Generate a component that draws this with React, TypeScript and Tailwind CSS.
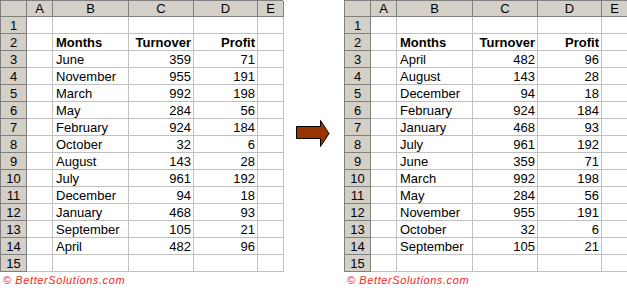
const before: [string, number, number][] = [
  ["June", 359, 71],
  ["November", 955, 191],
  ["March", 992, 198],
  ["May", 284, 56],
  ["February", 924, 184],
  ["October", 32, 6],
  ["August", 143, 28],
  ["July", 961, 192],
  ["December", 94, 18],
  ["January", 468, 93],
  ["September", 105, 21],
  ["April", 482, 96],
];

const after: [string, number, number][] = [
  ["April", 482, 96],
  ["August", 143, 28],
  ["December", 94, 18],
  ["February", 924, 184],
  ["January", 468, 93],
  ["July", 961, 192],
  ["June", 359, 71],
  ["March", 992, 198],
  ["May", 284, 56],
  ["November", 955, 191],
  ["October", 32, 6],
  ["September", 105, 21],
];

const cols = ["A", "B", "C", "D", "E"];

const Sheet = ({ rows }: { rows: [string, number, number][] }) => {
  const body: (string | number)[][] = [
    ["", "", "", "", ""],
    ["", "Months", "Turnover", "Profit", ""],
    ...rows.map((r) => ["", r[0], r[1], r[2], ""]),
    ["", "", "", "", ""],
  ];
  return (
    <div className="flex flex-col">
      <div className="grid grid-cols-[26px_26px_76px_65px_64px_26px] border-l border-t border-[#808080] w-[283px]">
        <div className="h-[16px] bg-[#d4d0c8] border-r border-b border-[#808080]" />
        {cols.map((c) => (
          <div
            key={c}
            className="h-[16px] bg-[#d4d0c8] border-r border-b border-[#808080] flex items-center justify-center leading-none"
          >
            {c}
          </div>
        ))}
        {body.map((r, i) => (
          <div key={i} className="contents">
            <div className="h-[17px] bg-[#d4d0c8] border-r border-b border-[#808080] flex items-center justify-center leading-none">
              {i + 1}
            </div>
            {r.map((v, j) => (
              <div
                key={j}
                className={`h-[17px] border-r border-b border-[#c0c0c0] flex items-center leading-none overflow-hidden whitespace-nowrap ${
                  j === 1 ? "justify-start pl-[3px]" : "justify-end pr-[2px]"
                } ${i === 1 ? "font-bold" : ""}`}
              >
                {v}
              </div>
            ))}
          </div>
        ))}
      </div>
      <div className="pl-[3px] pt-[3px] text-[11px] italic tracking-[0.6px] text-[#f02828] leading-none">
        © BetterSolutions.com
      </div>
    </div>
  );
};

export default function App() {
  return (
    <div
      className="w-[627px] h-[288px] bg-white flex text-[13px] text-black"
      style={{ fontFamily: '"Liberation Sans", Arial, sans-serif' }}
    >
      <Sheet rows={before} />
      <div className="w-[61px] pl-[13px] pt-[120px]">
        <svg width="34" height="27" viewBox="0 0 34 27">
          <path
            d="M0.5 6.5 H24.5 V0.5 L33 13.5 L24.5 26.5 V18.5 H0.5 Z"
            fill="#993300"
            stroke="#000"
            strokeWidth="1"
          />
        </svg>
      </div>
      <Sheet rows={after} />
    </div>
  );
}
